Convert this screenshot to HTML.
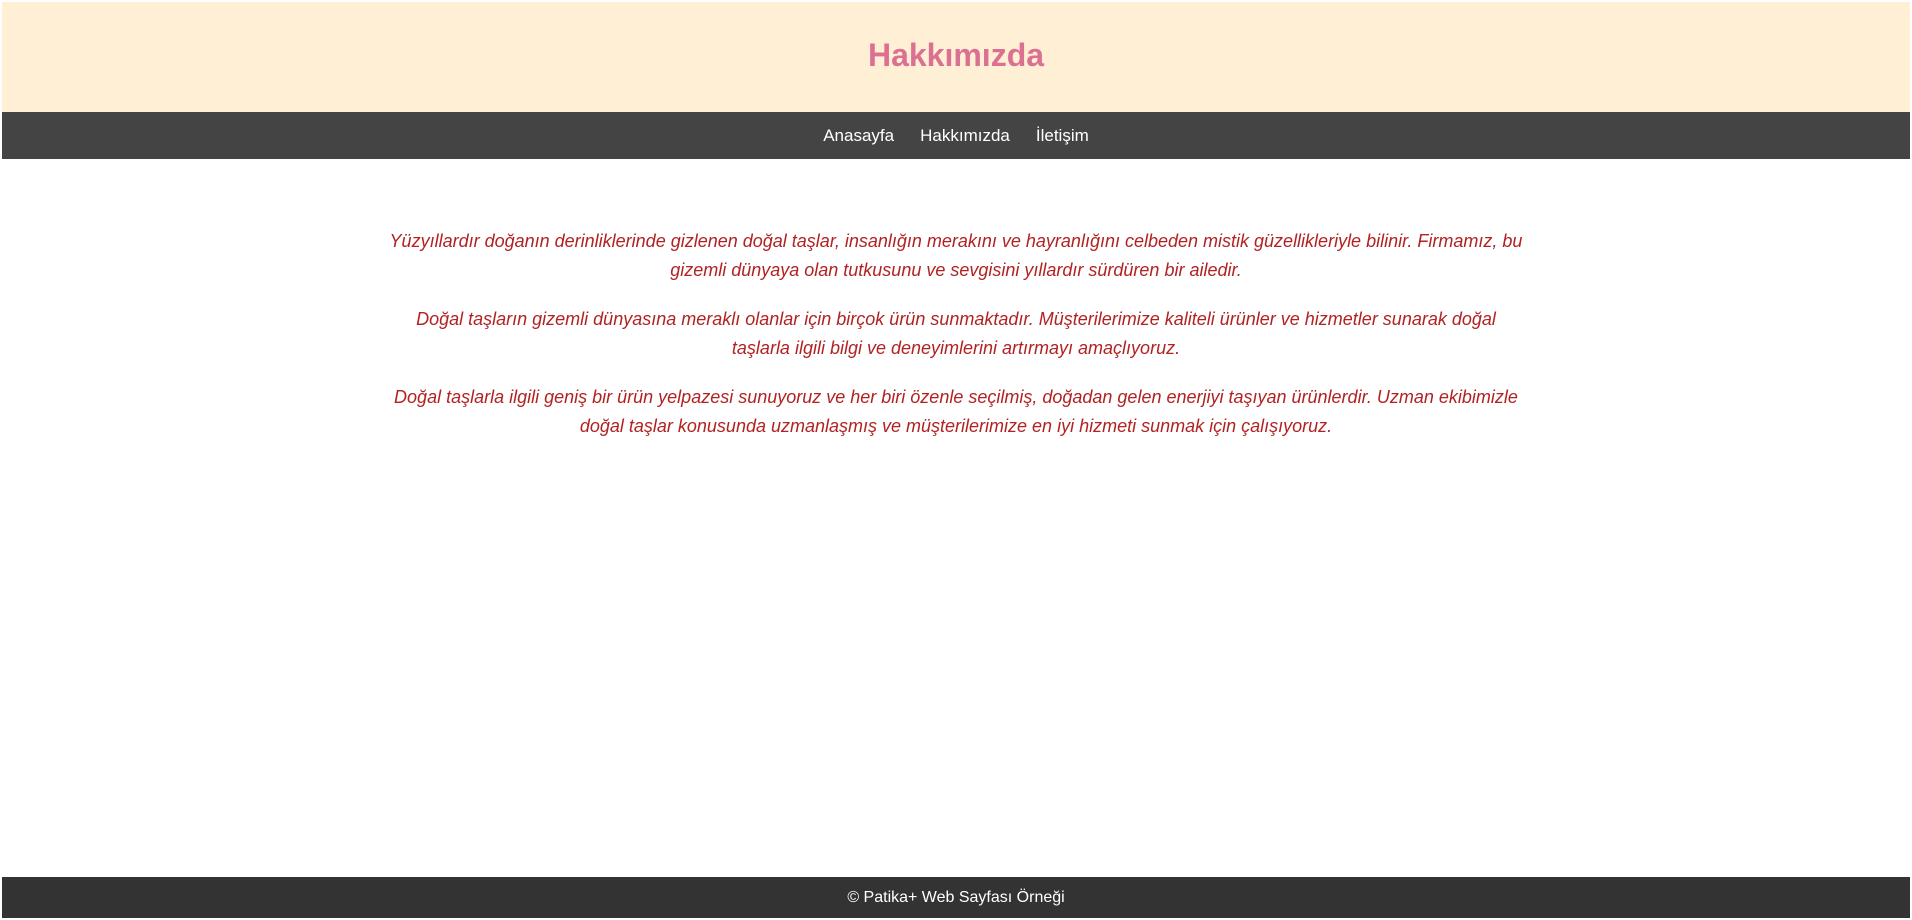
<!DOCTYPE html>
<html><head><meta charset="utf-8"><style>
html,body{margin:0;padding:0;background:#fff;}
body{width:1912px;height:920px;position:relative;font-family:"Liberation Sans",Arial,sans-serif;overflow:hidden;}
.header{position:absolute;left:2px;top:2px;width:1908px;height:110px;background:#ffefd5;text-align:center;}
.header h1{margin:0;line-height:106px;font-size:32px;color:#db7093;font-weight:bold;}
.nav{position:absolute;left:2px;top:112px;width:1908px;height:47px;background:#444;text-align:center;line-height:47px;font-size:17px;}
.nav a{color:#fff;text-decoration:none;margin:0 13px;}
.main{position:absolute;left:382px;top:227px;width:1148px;text-align:center;color:#b22222;font-style:italic;font-size:18px;line-height:29px;}
.main p{margin:0 0 20px;}
.footer{position:absolute;left:2px;top:877px;width:1908px;height:41px;background:#333;color:#fff;text-align:center;line-height:42px;font-size:16px;}
</style></head><body>
<div class="header"><h1>Hakkımızda</h1></div>
<div class="nav"><a>Anasayfa</a><a>Hakkımızda</a><a>İletişim</a></div>
<div class="main">
<p>Yüzyıllardır doğanın derinliklerinde gizlenen doğal taşlar, insanlığın merakını ve hayranlığını celbeden mistik güzellikleriyle bilinir. Firmamız, bu gizemli dünyaya olan tutkusunu ve sevgisini yıllardır sürdüren bir ailedir.</p>
<p>Doğal taşların gizemli dünyasına meraklı olanlar için birçok ürün sunmaktadır. Müşterilerimize kaliteli ürünler ve hizmetler sunarak doğal<br>taşlarla ilgili bilgi ve deneyimlerini artırmayı amaçlıyoruz.</p>
<p>Doğal taşlarla ilgili geniş bir ürün yelpazesi sunuyoruz ve her biri özenle seçilmiş, doğadan gelen enerjiyi taşıyan ürünlerdir. Uzman ekibimizle<br>doğal taşlar konusunda uzmanlaşmış ve müşterilerimize en iyi hizmeti sunmak için çalışıyoruz.</p>
</div>
<div class="footer">© Patika+ Web Sayfası Örneği</div>
</body></html>
